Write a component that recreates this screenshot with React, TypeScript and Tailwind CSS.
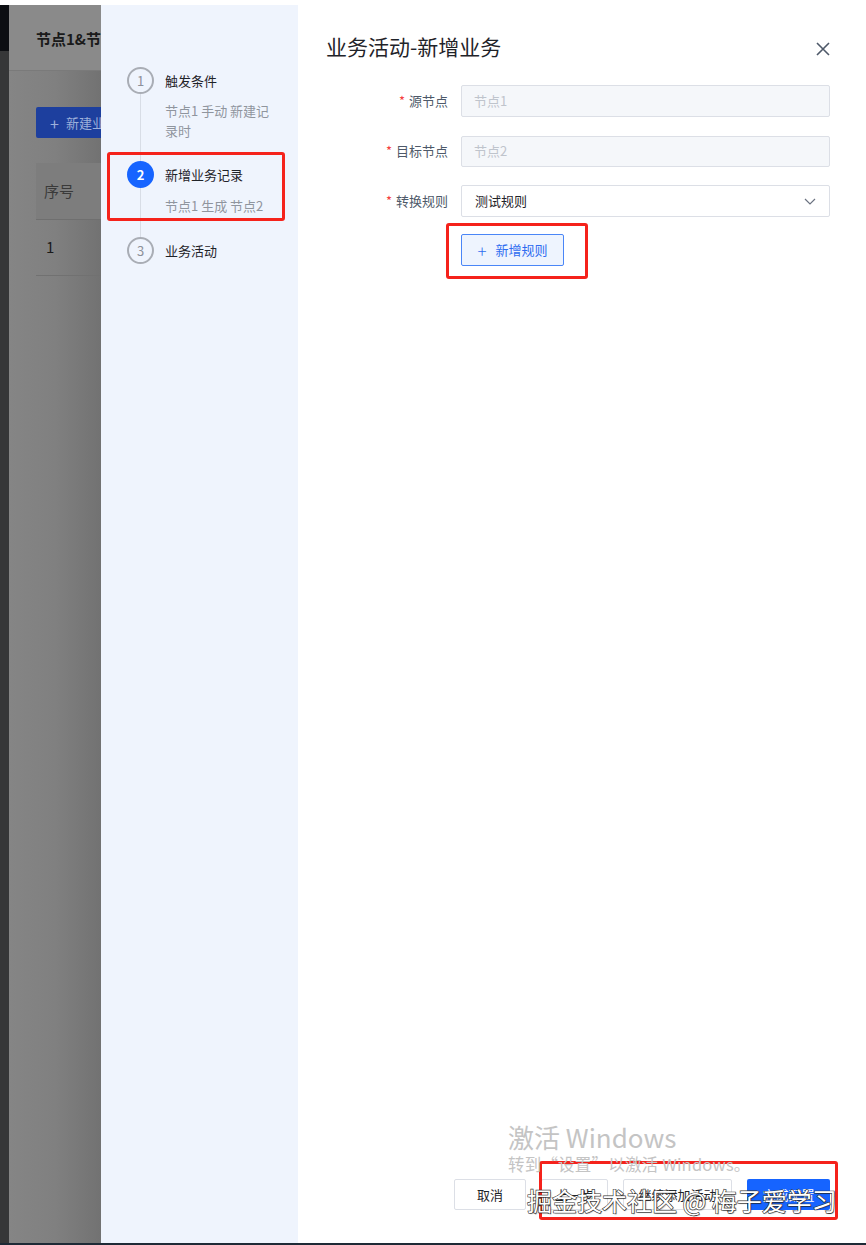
import React from "react";

const font = { fontFamily: '"Noto Sans CJK SC", "Noto Sans", sans-serif' };

function Step({ n, title, desc, active, last }: { n: number; title: string; desc?: string[]; active?: boolean; last?: boolean }) {
  return (
    <div className="flex gap-[11px]">
      <div className="flex flex-col items-center w-[27px] shrink-0">
        <div
          className={
            active
              ? "w-[27px] h-[27px] rounded-full bg-[#1664ff] text-white text-[13px] font-semibold flex items-center justify-center"
              : "w-[27px] h-[27px] rounded-full border-2 border-[#a9adb5] text-[#8c9099] text-[13px] flex items-center justify-center"
          }
        >
          {n}
        </div>
        {!last && <div className="flex-1 w-px bg-[#d8dde6]" />}
      </div>
      <div className={last ? "pt-[4px]" : active ? "pt-[4px] pb-[21px]" : "pt-[4px] pb-[20px]"}>
        <div className="text-[13px] leading-[19px] text-[#1f2329]">{title}</div>
        {desc && (
          <div className={(active ? "mt-[12px] " : "mt-[11px] ") + "text-[13px] leading-[20px] text-[#8f959e] w-[116px]"}>
            {desc.map((d, i) => (
              <div key={i}>{d}</div>
            ))}
          </div>
        )}
      </div>
    </div>
  );
}

function Row({ label, children }: { label: string; children: React.ReactNode }) {
  return (
    <div className="flex items-center h-[32px]">
      <div className="w-[135px] pr-[13px] text-right text-[13px] text-[#4e5969]">
        <span className="text-[#f53f3f] mr-[4px]">*</span>
        {label}
      </div>
      <div className="flex-1">{children}</div>
    </div>
  );
}

export default function App() {
  return (
    <div className="relative w-[866px] h-[1245px] bg-white overflow-hidden flex flex-col" style={font}>
      <div className="h-[5px] bg-white" />
      <div className="flex-1 flex">
        {/* dark side strip */}
        <div className="w-[9px] flex flex-col">
          <div className="h-[46px] bg-[#0c0e12]" />
          <div className="flex-1 bg-[#363738]" />
        </div>
        {/* dimmed page */}
        <div className="w-[92px] bg-gradient-to-r from-[#858585] via-[#808080] to-[#727272] flex flex-col">
          <div className="h-[66px] bg-[#8a8a8a] border-b border-[#7a7a7a] pl-[27px] pt-[23px] text-[15px] font-bold text-[#1a1a1a] whitespace-nowrap overflow-hidden">
            节点1&amp;节点2
          </div>
          <div className="pl-[27px] pt-[36px]">
            <div className="h-[31px] bg-[#1d3f9e] rounded-l-[2px] flex items-center pl-[14px] text-[13px] text-[#9db0da] whitespace-nowrap overflow-hidden">
              <span className="mr-[7px] text-[16px] leading-none">+</span>新建业务
            </div>
          </div>
          <div className="ml-[27px] mt-[25px] h-[57px] bg-[#7d7d7d] border-b border-[#6f6f6f] flex items-center pl-[8px] text-[15px] text-[#3a3a3a]">
            序号
          </div>
          <div className="ml-[27px] h-[56px] border-b border-[#717171] flex items-center pl-[10px] text-[15px] text-[#1a1a1a]">
            1
          </div>
        </div>
        {/* steps panel */}
        <div className="w-[197px] bg-[#eff4fd] pl-[26px] pt-[62px]">
          <Step n={1} title="触发条件" desc={["节点1 手动 新建记", "录时"]} />
          <Step n={2} title="新增业务记录" desc={["节点1 生成 节点2"]} active />
          <Step n={3} title="业务活动" last />
        </div>
        {/* form panel */}
        <div className="flex-1 bg-white flex flex-col pl-[28px] pr-[36px]">
          <div className="flex items-center justify-between pt-[26px] h-[58px]">
            <div className="text-[21px] text-[#1f2329]">业务活动-新增业务</div>
            <svg width="16" height="16" viewBox="0 0 16 16" className="mr-[-1px] mt-[4px]">
              <path d="M2 2 L14 14 M14 2 L2 14" stroke="#4e5969" strokeWidth="1.6" />
            </svg>
          </div>
          <div className="flex flex-col gap-[18px] mt-[22px]">
            <Row label="源节点">
              <div className="h-[32px] rounded-[2px] border border-[#dcdfe6] bg-[#f5f7fa] flex items-center px-[12px] text-[13px] text-[#bfc4cc]">节点1</div>
            </Row>
            <Row label="目标节点">
              <div className="h-[31px] rounded-[2px] border border-[#dcdfe6] bg-[#f5f7fa] flex items-center px-[12px] text-[13px] text-[#bfc4cc]">节点2</div>
            </Row>
            <Row label="转换规则">
              <div className="h-[32px] rounded-[2px] border border-[#dcdfe6] bg-white flex items-center justify-between pl-[13px] pr-[12px] text-[13px] text-[#1f2329]">
                测试规则
                <svg width="14" height="14" viewBox="0 0 14 14">
                  <path d="M2 5 L7 10 L12 5" fill="none" stroke="#6b7280" strokeWidth="1.2" />
                </svg>
              </div>
            </Row>
          </div>
          <div className="ml-[135px] mt-[17px]">
            <div className="w-[103px] h-[32px] rounded-[2px] border border-[#4a86f7] bg-[#eef4fe] flex items-center justify-center gap-[9px] text-[13px] text-[#2f6cf0]">
              <span className="text-[17px] leading-none font-light">+</span>新增规则
            </div>
          </div>
          <div className="flex-1" />
          <div className="flex justify-end gap-[15px] pb-[33px]">
            <div className="w-[72px] h-[31px] border border-[#dcdfe6] rounded-[2px] flex items-center justify-center text-[13px] text-[#1f2329]">取消</div>
            <div className="w-[67px] h-[31px] border border-[#dcdfe6] rounded-[2px] flex items-center justify-center text-[13px] text-[#1f2329]">上一步</div>
            <div className="w-[109px] h-[31px] border border-[#dcdfe6] rounded-[2px] flex items-center justify-center text-[13px] text-[#1f2329]">继续添加活动</div>
            <div className="w-[83px] h-[31px] bg-[#1664ff] rounded-[2px] flex items-center justify-center text-[13px] text-white">完成配置</div>
          </div>
        </div>
      </div>
      <div className="h-[2px] bg-[#1e2a36]" />

      {/* overlays: highlight boxes */}
      <div className="absolute left-[107px] top-[152px] w-[178px] h-[69px] border-[3px] border-[#f5221b] rounded-[3px]" />
      <div className="absolute left-[446px] top-[223px] w-[142px] h-[56px] border-[3px] border-[#f5221b] rounded-[3px]" />
      <div className="absolute left-[539px] top-[1161px] w-[299px] h-[59px] border-[3px] border-[#f5221b] rounded-[3px]" />

      {/* windows activation watermark */}
      <div className="absolute left-[508px] top-[1121px] text-[#c4c4c4] pointer-events-none">
        <div className="text-[26px] leading-[32px]">激活 Windows</div>
        <div className="text-[16.5px] leading-[20px] mt-[1px] tracking-[0.2px]">转到“设置”以激活 Windows。</div>
      </div>

      {/* site watermark */}
      <div
        className="absolute left-[527px] top-[1182px] text-[25px] leading-[36px] text-white whitespace-nowrap pointer-events-none"
        style={{ WebkitTextStroke: "1.2px #333", paintOrder: "stroke fill", textShadow: "1px 1px 1px rgba(0,0,0,0.35)" }}
      >
        掘金技术社区 @ 梅子爱学习
      </div>
    </div>
  );
}
